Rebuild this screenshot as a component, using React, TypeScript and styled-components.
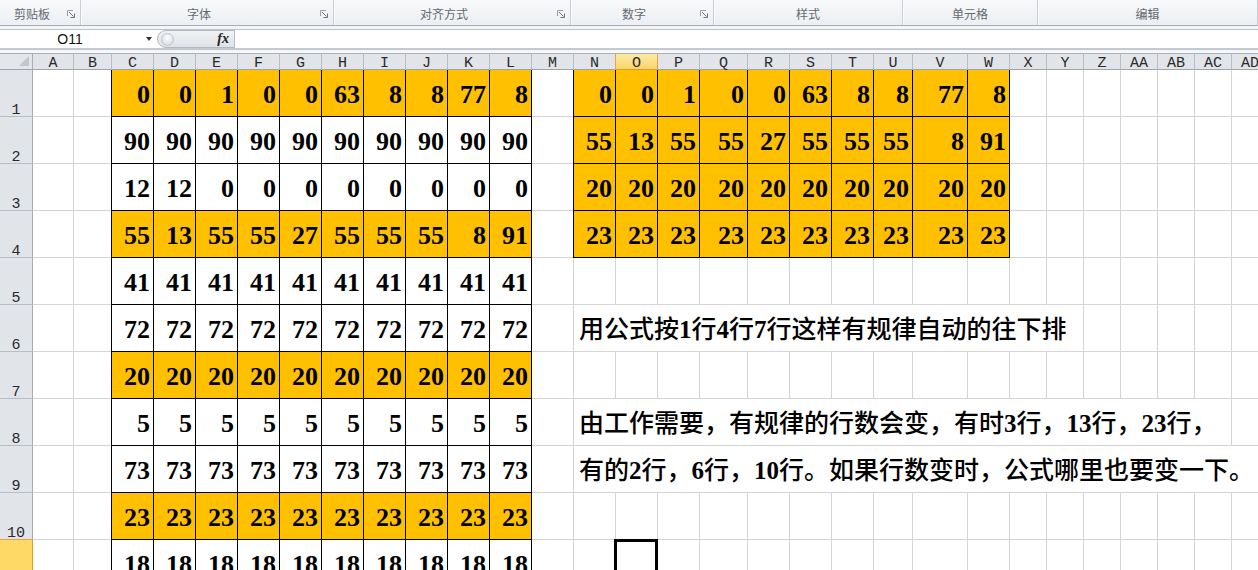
import React from 'react'
import styled, { createGlobalStyle, css } from 'styled-components'

const COLUMNS: [string, number][] = [
  ['A', 41], ['B', 38], ['C', 42], ['D', 42], ['E', 42], ['F', 42], ['G', 42],
  ['H', 42], ['I', 42], ['J', 42], ['K', 42], ['L', 42], ['M', 42], ['N', 42],
  ['O', 42], ['P', 42], ['Q', 48], ['R', 42], ['S', 42], ['T', 42], ['U', 39],
  ['V', 55], ['W', 42], ['X', 37], ['Y', 37], ['Z', 37], ['AA', 37], ['AB', 37],
  ['AC', 37], ['AD', 37],
]

const fill = (n: number) => Array(10).fill(n) as number[]

// left block C..L, rows 1..11
const LEFT: number[][] = [
  [0, 0, 1, 0, 0, 63, 8, 8, 77, 8],
  fill(90),
  [12, 12, 0, 0, 0, 0, 0, 0, 0, 0],
  [55, 13, 55, 55, 27, 55, 55, 55, 8, 91],
  fill(41),
  fill(72),
  fill(20),
  fill(5),
  fill(73),
  fill(23),
  fill(18),
]
const LEFT_FILLED = [1, 4, 7, 10]

// right block N..W, rows 1..4 (all filled)
const RIGHT: number[][] = [
  [0, 0, 1, 0, 0, 63, 8, 8, 77, 8],
  [55, 13, 55, 55, 27, 55, 55, 55, 8, 91],
  fill(20),
  fill(23),
]

const NOTES: Record<number, { text: string; span: number }> = {
  6: { text: '用公式按1行4行7行这样有规律自动的往下排', span: 12 },
  8: { text: '由工作需要，有规律的行数会变，有时3行，13行，23行，', span: 16 },
  9: { text: '有的2行，6行，10行。如果行数变时，公式哪里也要变一下。', span: 17 },
}

const LEFT_START = 2 // C
const RIGHT_START = 13 // N
const SELECTED = { row: 11, col: 14 } // O11

const GROUPS: { label: string; width?: number; launcher?: boolean }[] = [
  { label: '剪贴板', width: 81, launcher: true },
  { label: '字体', width: 253, launcher: true },
  { label: '对齐方式', width: 237, launcher: true },
  { label: '数字', width: 143, launcher: true },
  { label: '样式', width: 189 },
  { label: '单元格', width: 135 },
  { label: '编辑' },
]

const LauncherIcon = () => (
  <svg width="8" height="8" viewBox="0 0 8 8">
    <path d="M0.5 6V0.5H6" fill="none" stroke="#9a9fa6" />
    <path d="M2 2L6.5 6.5" stroke="#6f757d" />
    <path d="M3.5 7.5H7.5V3.5" fill="none" stroke="#6f757d" />
  </svg>
)

// digits in the notes are set bolder than the Chinese text around them
function NoteText({ text }: { text: string }) {
  return (
    <>
      {text.split(/(\d+)/).map((part, i) =>
        /^\d+$/.test(part) ? <Digits key={i}>{part}</Digits> : part
      )}
    </>
  )
}

export default function App() {
  const rows = Array.from({ length: 11 }, (_, i) => i + 1)

  return (
    <>
      <GlobalStyle />
      <Ribbon>
        {GROUPS.map((g) => (
          <RibbonGroup key={g.label} $w={g.width}>
            <GroupLabel>{g.label}</GroupLabel>
            {g.launcher && (
              <Launcher>
                <LauncherIcon />
              </Launcher>
            )}
          </RibbonGroup>
        ))}
      </Ribbon>
      <RibbonGap />
      <FormulaBar>
        <NameBox>
          <NameText>O11</NameText>
          <DropArrow />
        </NameBox>
        <FxCapsule>
          <Knob />
          <FxLabel>fx</FxLabel>
        </FxCapsule>
        <FormulaInput />
      </FormulaBar>
      <SheetGap />
      <Sheet $widths={COLUMNS.map((c) => c[1])}>
        <Corner>
          <CornerMark />
        </Corner>
        {COLUMNS.map(([name], ci) => (
          <ColHeader key={name} $active={ci === SELECTED.col}>
            {name}
          </ColHeader>
        ))}
        {rows.map((r) => {
          const note = NOTES[r]
          const cells: React.ReactNode[] = []
          for (let ci = 0; ci < COLUMNS.length; ci++) {
            if (note && ci === RIGHT_START) {
              cells.push(
                <NoteCell key={ci} $span={note.span}>
                  <NoteText text={note.text} />
                </NoteCell>
              )
              ci += note.span - 1
              continue
            }
            const li = ci - LEFT_START
            const ri = ci - RIGHT_START
            let value: number | undefined
            let filled = false
            let boxed = false
            let edge = false
            if (li >= 0 && li < 10) {
              value = LEFT[r - 1][li]
              filled = LEFT_FILLED.includes(r)
              boxed = true
              edge = li === 0
            } else if (ri >= 0 && ri < 10 && r <= RIGHT.length) {
              value = RIGHT[r - 1][ri]
              filled = true
              boxed = true
              edge = ri === 0
            }
            cells.push(
              <Cell
                key={ci}
                $filled={filled}
                $boxed={boxed}
                $edge={edge}
                $selected={r === SELECTED.row && ci === SELECTED.col}
              >
                {value}
              </Cell>
            )
          }
          return (
            <React.Fragment key={r}>
              <RowHeader $active={r === SELECTED.row}>{r}</RowHeader>
              {cells}
            </React.Fragment>
          )
        })}
      </Sheet>
    </>
  )
}

const GlobalStyle = createGlobalStyle`
  html, body {
    margin: 0;
    padding: 0;
    background: #fff;
    overflow: hidden;
  }
  body {
    font-family: "Liberation Sans", "Noto Sans CJK SC", sans-serif;
  }
`

const Ribbon = styled.div`
  display: flex;
  height: 25px;
  background: linear-gradient(#f8f9fa, #eceff3);
  border-bottom: 1px solid #a6adb6;
`

const RibbonGroup = styled.div<{ $w?: number }>`
  flex: ${({ $w }) => ($w ? `0 0 ${$w}px` : '1')};
  box-sizing: border-box;
  display: flex;
  align-items: center;
  border-right: 1px solid #c9ced5;
  box-shadow: 1px 0 0 #fbfcfd;
`

const GroupLabel = styled.span`
  flex: 1;
  text-align: center;
  font-size: 12px;
  color: #646a72;
  font-family: "Noto Sans CJK SC", sans-serif;
  padding-top: 2px;
`

const Launcher = styled.span`
  display: flex;
  width: 8px;
  margin: 2px 5px 0 3px;
`

const RibbonGap = styled.div`
  height: 3px;
  background: #f4f5f7;
`

const FormulaBar = styled.div`
  display: flex;
  height: 18px;
  border-top: 1px solid #bcc2ca;
  border-bottom: 1px solid #c6cbd2;
  background: #fff;
`

const NameBox = styled.div`
  flex: 0 0 157px;
  display: flex;
  align-items: center;
`

const NameText = styled.span`
  width: 140px;
  text-align: center;
  font: 14px "Liberation Sans", sans-serif;
  color: #111;
`

const DropArrow = styled.span`
  width: 0;
  height: 0;
  margin-left: 6px;
  border-left: 3.5px solid transparent;
  border-right: 3.5px solid transparent;
  border-top: 4px solid #333;
`

const FxCapsule = styled.div`
  flex: 0 0 78px;
  box-sizing: border-box;
  display: flex;
  align-items: center;
  background: linear-gradient(#f1f2f5, #dfe2e7);
  border: 1px solid #b3b9c1;
  border-radius: 9px 0 0 9px;
`

const Knob = styled.span`
  width: 11px;
  height: 11px;
  margin-left: 3px;
  border-radius: 50%;
  background: radial-gradient(circle at 50% 35%, #ffffff, #cfd3d9);
  border: 1px solid #c0c5cc;
`

const FxLabel = styled.span`
  margin-left: auto;
  margin-right: 5px;
  font: italic 700 14px "Liberation Serif", serif;
  color: #222;
`

const FormulaInput = styled.div`
  flex: 1;
  background: #fff;
`

const SheetGap = styled.div`
  height: 3px;
  border-top: 1px solid #c2c7ce;
  background: #f6f7f9;
`

const Sheet = styled.div<{ $widths: number[] }>`
  display: grid;
  grid-template-columns: 33px ${({ $widths }) => $widths.map((w) => `${w}px`).join(' ')};
  grid-template-rows: 17px repeat(11, 47px);
  width: max-content;
`

const headerBase = css`
  box-sizing: border-box;
  display: flex;
  align-items: flex-end;
  justify-content: center;
  font: 15px/10px "Liberation Mono", monospace;
  color: #2a2a2a;
`

const Corner = styled.div`
  box-sizing: border-box;
  display: flex;
  background: #e3e6ea;
  border-top: 1px solid #aab0b8;
  border-right: 1px solid #a9aeb5;
  border-bottom: 1px solid #9ea4ac;
`

const CornerMark = styled.span`
  width: 0;
  height: 0;
  margin: auto 3px 3px auto;
  border-left: 10px solid transparent;
  border-bottom: 10px solid #c3c7cd;
`

const ColHeader = styled.div<{ $active?: boolean }>`
  ${headerBase};
  border-top: 1px solid #aab0b8;
  border-right: 1px solid #b8bdc3;
  border-bottom: 1px solid #9ea4ac;
  background: #e1e4e9;
  ${({ $active }) =>
    $active &&
    css`
      background: linear-gradient(#fdeaa6, #f7d36a);
      border-right-color: #e7a446;
      border-bottom-color: #e39a35;
      box-shadow: -1px 0 0 #e7a446;
    `}
`

const RowHeader = styled.div<{ $active?: boolean }>`
  ${headerBase};
  border-right: 1px solid #a7acb3;
  border-bottom: 1px solid #b8bdc3;
  background: #e1e4e9;
  ${({ $active }) =>
    $active &&
    css`
      background: #ffd966;
      border-right-color: #e39a35;
      box-shadow: 0 -1px 0 #e7a446;
    `}
`

const Cell = styled.div<{
  $filled?: boolean
  $boxed?: boolean
  $edge?: boolean
  $selected?: boolean
}>`
  box-sizing: border-box;
  display: flex;
  align-items: flex-end;
  justify-content: flex-end;
  padding: 0 3px 8px 0;
  font: 700 26px/26px "Liberation Serif", serif;
  color: #000;
  background: ${({ $filled }) => ($filled ? '#ffc000' : '#fff')};
  border-right: 1px solid ${({ $boxed }) => ($boxed ? '#000' : '#d4d4d4')};
  border-bottom: 1px solid ${({ $boxed }) => ($boxed ? '#000' : '#d4d4d4')};
  ${({ $edge }) => $edge && css`box-shadow: -1px 0 0 #000;`}
  ${({ $selected }) =>
    $selected &&
    css`
      position: relative;
      &::after {
        content: '';
        position: absolute;
        left: -2px;
        top: -1px;
        right: -1px;
        bottom: -3px;
        border: 3px solid #000;
      }
    `}
`

const NoteCell = styled(Cell)<{ $span: number }>`
  grid-column: span ${({ $span }) => $span};
  justify-content: flex-start;
  padding: 0 0 8px 5px;
  white-space: nowrap;
  font: 500 25px/26px "Liberation Serif", "Noto Sans CJK SC", serif;
`

const Digits = styled.span`
  font-weight: 700;
`
